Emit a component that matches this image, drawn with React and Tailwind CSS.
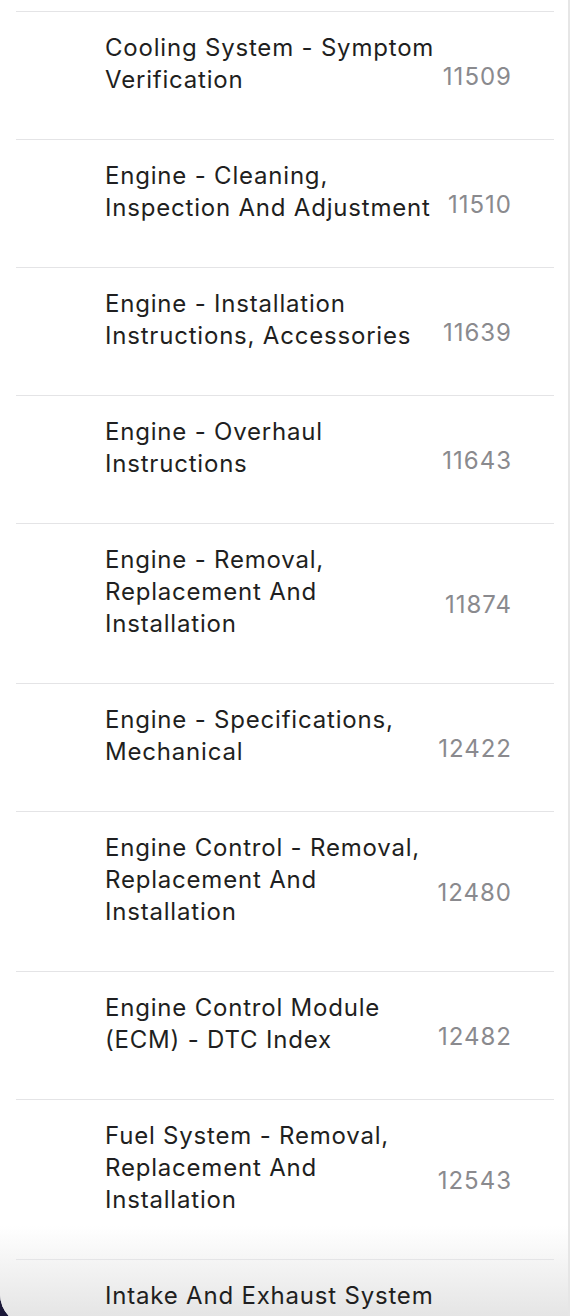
import React from "react";

const rows = [
  { lines: ["Cooling System - Symptom", "Verification"], n: "11509" },
  { lines: ["Engine - Cleaning,", "Inspection And Adjustment"], n: "11510" },
  { lines: ["Engine - Installation", "Instructions, Accessories"], n: "11639" },
  { lines: ["Engine - Overhaul", "Instructions"], n: "11643" },
  { lines: ["Engine - Removal,", "Replacement And", "Installation"], n: "11874" },
  { lines: ["Engine - Specifications,", "Mechanical"], n: "12422" },
  { lines: ["Engine Control - Removal,", "Replacement And", "Installation"], n: "12480" },
  { lines: ["Engine Control Module", "(ECM) - DTC Index"], n: "12482" },
  { lines: ["Fuel System - Removal,", "Replacement And", "Installation"], n: "12543" },
  { lines: ["Intake And Exhaust System"], n: "" },
];

export default function App() {
  return (
    <div
      className="h-[1316px] w-[570px] overflow-hidden bg-[#1b1838]"
      style={{ fontFamily: "Inter, 'Noto Sans', sans-serif" }}
    >
      <div className="relative flex h-[1326px] overflow-hidden rounded-bl-[32px] bg-white">
        <div className="pointer-events-none absolute bottom-0 left-0 right-0 h-[100px] bg-gradient-to-b from-white to-[#e2e2e2]" />
        <div className="relative flex-1 pl-4 pr-[14px] pt-[11px]">
          {rows.map((r, i) => (
            <div
              key={i}
              className="flex items-center border-t border-[#e4e4e6]"
            >
              <div className="flex-1 pl-[89px] pt-[20px] pb-[43px] text-[24px] leading-[32px] tracking-[0.8px] text-[#1f1f21]">
                {r.lines.map((l) => (
                  <div key={l} className="whitespace-nowrap">
                    {l}
                  </div>
                ))}
              </div>
              {r.n && (
                <div className="pr-[42px] pt-[2px] text-[24px] leading-[32px] tracking-[1px] text-[#8a8a8e]">
                  {r.n}
                </div>
              )}
            </div>
          ))}
        </div>
        <div className="relative w-[2px] bg-[#e6e6e6]" />
      </div>
    </div>
  );
}
